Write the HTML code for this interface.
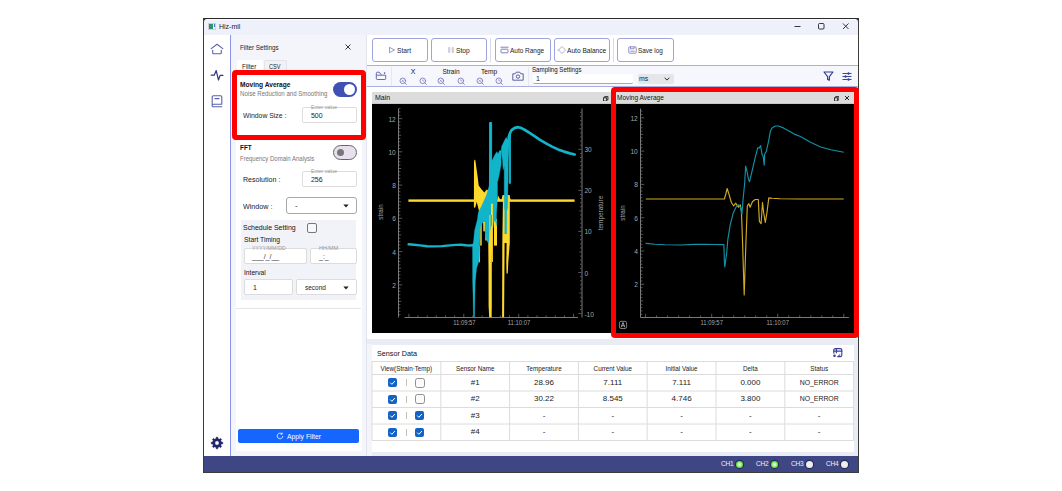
<!DOCTYPE html>
<html>
<head>
<meta charset="utf-8">
<title>Hiz-mil</title>
<style>
*{box-sizing:border-box;margin:0;padding:0}
html,body{width:1062px;height:491px;background:#fff;overflow:hidden;font-family:"Liberation Sans",sans-serif;color:#222}
.a{position:absolute}
.t{position:absolute;white-space:nowrap;line-height:10px;font-size:7.5px;color:#222}
.t{transform-origin:0 50%}
.ph{transform-origin:0 50%}
.c{text-align:center;transform-origin:50% 50%}
.btn{position:absolute;top:38px;height:24px;background:#fff;border:1px solid #9ea4de;border-radius:3px}
.inp{position:absolute;background:#fff;border:1px solid #dcdcdc;border-radius:2px}
.ph{position:absolute;font-size:5px;line-height:6px;color:#999;white-space:nowrap;}
.cb{position:absolute;width:9px;height:9px;border-radius:2px}
.on{background:#1565c0}
.off{background:#fff;border:1px solid #8a8a8a}
.vs{position:absolute;width:1px;background:#d9dbe6}
.hl{position:absolute;height:1px}
</style>
</head>
<body>
<!-- window frame -->
<div class="a" style="left:203px;top:18px;width:656px;height:455px;background:#f2f4fa;border:1px solid #3c3c3c;border-top:1px solid #2a2a2a"></div>
<!-- title bar -->
<div class="a" style="left:204px;top:19px;width:3px;height:3px;background:#222"></div><div class="a" style="left:855px;top:19px;width:3px;height:3px;background:#222"></div><div class="a" style="left:204px;top:19px;width:654px;height:16px;background:#eef1f9;border-radius:3px 3px 0 0;border-top:1px solid #fafbff"></div>
<div class="a" style="left:208px;top:23px;width:8px;height:6.500px;background:linear-gradient(to right,#2b7fa0 0,#2e9a5c 3.500px,#f4f4f4 3.500px);border:1px solid #cfcfd4"></div>
<div class="a" style="left:214px;top:24px;width:1px;height:3px;background:#3a7bd0"></div>
<div class="t" style="left:219px;top:22px;font-size:7px;color:#222">Hiz-mil</div>
<svg class="a" style="left:790px;top:19px" width="68" height="16" viewBox="0 0 68 16"><g stroke="#222" stroke-width="0.9" fill="none"><path d="M4.5 7.5h6"/><rect x="28.5" y="4.5" width="5.5" height="5.5" rx="1"/><path d="M53 4.5l5.5 5.5M58.5 4.5l-5.5 5.5"/></g></svg>
<!-- nav -->
<div class="a" style="left:204px;top:35px;width:26px;height:421px;background:#fff"></div>
<div class="a" style="left:230px;top:35px;width:1px;height:421px;background:#8d95ea"></div>

<!-- nav icons -->
<svg class="a" style="left:210px;top:43px" width="14" height="12" viewBox="0 0 14 12"><g fill="none" stroke="#5a61aa" stroke-width="1.100" stroke-linejoin="round" stroke-linecap="round"><path d="M1.200 5.600L7 1.200l5.800 4.400"/><path d="M2.700 7.200v2.600a1 1 0 0 0 1 1h6.600a1 1 0 0 0 1-1V7.200"/></g></svg>
<svg class="a" style="left:210px;top:68px" width="14" height="14" viewBox="0 0 14 14"><path d="M1.200 7.200h3l2-4.600 2.300 9.400 1.600-4.600h2.800" fill="none" stroke="#2f3788" stroke-width="1.200" stroke-linejoin="round" stroke-linecap="round"/></svg>
<svg class="a" style="left:210px;top:94px" width="14" height="14" viewBox="0 0 14 14"><g fill="none" stroke="#5a61aa" stroke-width="1.100" stroke-linejoin="round" stroke-linecap="round"><path d="M2.200 11V3a1.200 1.200 0 0 1 1.200-1.200h7.200A1.200 1.200 0 0 1 11.800 3v7.200H3.400a1.100 1.100 0 0 0 0 2.600h8.400"/><path d="M5 4.600h4"/></g></svg>
<svg class="a" style="left:209px;top:435px" width="16" height="16" viewBox="0 0 16 16"><path fill="#1e2468" fill-rule="evenodd" stroke="#1e2468" stroke-width="0.600" stroke-linejoin="round" d="M7.00 3.82 L7.23 2.25 L8.77 2.25 L9.00 3.82 L10.25 4.33 L11.52 3.39 L12.61 4.48 L11.67 5.75 L12.18 7.00 L13.75 7.23 L13.75 8.77 L12.18 9.00 L11.67 10.25 L12.61 11.52 L11.52 12.61 L10.25 11.67 L9.00 12.18 L8.77 13.75 L7.23 13.75 L7.00 12.18 L5.75 11.67 L4.48 12.61 L3.39 11.52 L4.33 10.25 L3.82 9.00 L2.25 8.77 L2.25 7.23 L3.82 7.00 L4.33 5.75 L3.39 4.48 L4.48 3.39 L5.75 4.33Z M10.20 8.00 A2.2 2.2 0 1 0 5.80 8.00 A2.2 2.2 0 1 0 10.20 8.00Z"/></svg>

<!-- filter panel -->
<div class="a" style="left:232px;top:35px;width:134px;height:421px;background:#f4f5fa"></div>
<div class="a" style="left:236px;top:70px;width:126px;height:380.500px;background:#fff;border-radius:0 0 2px 2px"></div>
<div class="t" style="left:240px;top:43px;font-size:7.500px;color:#222;transform:scaleX(0.845)">Filter Settings</div>
<svg class="a" style="left:344px;top:43px" width="8" height="8" viewBox="0 0 8 8"><path d="M1.500 1.500l5 5M6.500 1.500l-5 5" stroke="#222" stroke-width="0.9" fill="none"/></svg>
<div class="a" style="left:237px;top:60px;width:26px;height:12px;background:#fff;border-radius:2px 2px 0 0"></div>
<div class="a" style="left:264px;top:60px;width:23px;height:12px;background:#f1f2f5;border:1px solid #e3e4ea;border-bottom:none;border-radius:2px 2px 0 0"></div>
<div class="t" style="left:242px;top:61.6px;font-size:7.500px;transform:scaleX(0.856)">Filter</div>
<div class="t" style="left:269px;top:61.6px;font-size:7.500px;transform:scaleX(0.740)">CSV</div>

<!-- moving average card -->
<div class="t" style="left:240px;top:80px;font-size:7.500px;font-weight:bold;color:#111;transform:scaleX(0.880)">Moving Average</div>
<div class="t" style="left:240px;top:89px;font-size:6.500px;color:#777;transform:scaleX(0.938)">Noise Reduction and Smoothing</div>
<div class="a" style="left:333px;top:82px;width:24px;height:15px;border-radius:8px;background:#3f51b5"></div>
<div class="a" style="left:344px;top:84px;width:11px;height:11px;border-radius:6px;background:#fff"></div>
<div class="t" style="left:243px;top:110.6px;font-size:8px;color:#222;transform:scaleX(0.856)">Window Size :</div>
<div class="inp" style="left:302px;top:107px;width:55px;height:16px"></div>
<div class="ph" style="left:311px;top:104px;transform:scaleX(1.028)">Enter value</div>
<div class="t" style="left:311px;top:110.6px;font-size:7.500px;transform:scaleX(0.928)">500</div>

<!-- FFT card -->
<div class="t" style="left:240px;top:142.5px;font-size:7.500px;font-weight:bold;color:#111;transform:scaleX(0.848)">FFT</div>
<div class="t" style="left:240px;top:154px;font-size:6.500px;color:#777;transform:scaleX(0.923)">Frequency Domain Analysis</div>
<div class="a" style="left:333px;top:145px;width:24px;height:15px;border-radius:8px;background:#e8e0ec;border:1px solid #666"></div>
<div class="a" style="left:337px;top:149px;width:7px;height:7px;border-radius:4px;background:#777"></div>
<div class="t" style="left:243px;top:174.5px;font-size:8px;transform:scaleX(0.884)">Resolution :</div>
<div class="inp" style="left:302px;top:171px;width:55px;height:16px"></div>
<div class="ph" style="left:311px;top:168px;transform:scaleX(1.028)">Enter value</div>
<div class="t" style="left:311px;top:175.4px;font-size:7.500px;transform:scaleX(0.928)">256</div>
<div class="t" style="left:243px;top:201.5px;font-size:8px;transform:scaleX(0.897)">Window :</div>
<div class="inp" style="left:286px;top:197px;width:71px;height:17px;border-color:#a8a8a8;border-radius:3px"></div>
<div class="t" style="left:295px;top:201px;font-size:7.500px">-</div>
<svg class="a" style="left:343px;top:204px" width="6" height="4" viewBox="0 0 6 4"><path d="M0.300 0.500h5.400L3 3.600z" fill="#222"/></svg>

<!-- schedule block -->
<div class="a" style="left:241px;top:220px;width:115px;height:80px;background:#f1f3f9"></div>
<div class="t" style="left:243px;top:223px;font-size:7.500px;color:#111;transform:scaleX(0.928)">Schedule Setting</div>
<div class="a" style="left:307px;top:223px;width:10px;height:10px;border:1px solid #777;border-radius:2px;background:#f7f7fb"></div>
<div class="t" style="left:244px;top:235px;font-size:7px;color:#111;transform:scaleX(0.965)">Start Timing</div>
<div class="inp" style="left:244px;top:248px;width:63px;height:16px"></div>
<div class="inp" style="left:310px;top:248px;width:47px;height:16px"></div>
<div class="ph" style="left:252px;top:245px;transform:scaleX(1.060)">YYYY/MM/DD</div>
<div class="ph" style="left:319px;top:245px;transform:scaleX(1.135)">HH/MM</div>
<div class="t" style="left:252px;top:252px;font-size:7px;color:#333">___/_/__</div>
<div class="t" style="left:319px;top:252px;font-size:7px;color:#333">_:_</div>
<div class="t" style="left:244px;top:268px;font-size:7px;color:#111;transform:scaleX(0.948)">Interval</div>
<div class="inp" style="left:244px;top:279px;width:49px;height:16px"></div>
<div class="inp" style="left:296px;top:279px;width:61px;height:16px"></div>
<div class="t" style="left:253px;top:283px;font-size:7px">1</div>
<div class="t" style="left:305px;top:283px;font-size:7px;transform:scaleX(0.925)">second</div>
<svg class="a" style="left:343px;top:286px" width="6" height="4" viewBox="0 0 6 4"><path d="M0.300 0.500h5.400L3 3.600z" fill="#222"/></svg>
<div class="hl" style="left:236px;top:308px;width:125px;background:#e6e6ea"></div>

<!-- apply -->
<div class="a" style="left:238px;top:429px;width:121px;height:14px;background:#1565ff;border-radius:2px"></div>
<div class="t" style="left:286.500px;top:432px;font-size:7.300px;color:#fff;transform:scaleX(0.931)">Apply Filter</div>
<svg class="a" style="left:276px;top:432px" width="8" height="8" viewBox="0 0 8 8"><path d="M6.800 4a2.800 2.800 0 1 1-.9-2.100M6.200 0.600v1.600H4.600" fill="none" stroke="#fff" stroke-width="0.800"/></svg>


<!-- top toolbar -->
<div class="a" style="left:367px;top:35px;width:491px;height:31px;background:#fff"></div>
<div class="hl" style="left:367px;top:65px;width:491px;background:#a9aee2"></div>
<div class="a" style="left:367px;top:66px;width:491px;height:21px;background:#f6f7fc"></div>
<div class="hl" style="left:367px;top:86px;width:491px;background:#a9aee2"></div>
<div class="a" style="left:366px;top:35px;width:1px;height:421px;background:#e3e5ee"></div>
<div class="btn" style="left:372px;width:56px"></div>
<div class="btn" style="left:431px;width:56px"></div>
<div class="vs" style="left:490px;top:38px;height:24px"></div>
<div class="btn" style="left:495px;width:56px"></div>
<div class="btn" style="left:554px;width:56px"></div>
<div class="vs" style="left:613px;top:38px;height:24px"></div>
<div class="btn" style="left:617px;width:57px"></div>
<svg class="a" style="left:388px;top:46px" width="8" height="8" viewBox="0 0 8 8"><path d="M1.500 1.300v5.400L6.500 4z" fill="none" stroke="#7a80b8" stroke-width="0.800" stroke-linejoin="round"/></svg>
<div class="t" style="left:397px;top:45.600px;font-size:7px;transform:scaleX(0.946)">Start</div>
<svg class="a" style="left:447px;top:46px" width="8" height="8" viewBox="0 0 8 8"><path d="M1.500 1.500h1.500v5h-1.500zM5 1.500h1.500v5H5z" fill="#d4d6e0" stroke="#b8bbcc" stroke-width="0.500"/></svg>
<div class="t" style="left:456px;top:45.600px;font-size:7px;transform:scaleX(0.951)">Stop</div>
<svg class="a" style="left:500px;top:46px" width="9" height="8" viewBox="0 0 9 8"><g fill="none" stroke="#6d74b8" stroke-width="0.900"><path d="M0.500 1.200h8"/><rect x="1" y="3.200" width="7" height="3.600" rx="0.500"/></g></svg>
<div class="t" style="left:510px;top:45.600px;font-size:7px;transform:scaleX(0.924)">Auto Range</div>
<svg class="a" style="left:557px;top:45px" width="10" height="10" viewBox="0 0 10 10"><path d="M5 1.500L8.500 5 5 8.500 1.500 5z" fill="none" stroke="#8a8fb8" stroke-width="0.700"/><path d="M0.500 5h1.500" stroke="#8a8fb8" stroke-width="0.600"/></svg>
<div class="t" style="left:567px;top:45.600px;font-size:7px;transform:scaleX(0.942)">Auto Balance</div>
<svg class="a" style="left:628px;top:46px" width="9" height="8" viewBox="0 0 9 8"><g fill="none" stroke="#6d74b8" stroke-width="0.800"><rect x="0.800" y="0.800" width="7.400" height="6.400" rx="0.800"/><path d="M2.500 0.800v2h3.500v-2M2.300 5.200h4.400"/></g></svg>
<div class="t" style="left:638px;top:45.600px;font-size:7px;transform:scaleX(0.908)">Save log</div>

<!-- second toolbar -->
<svg class="a" style="left:375px;top:71px" width="12" height="10" viewBox="0 0 12 10"><g fill="none" stroke="#646bb4" stroke-width="1" stroke-linejoin="round" stroke-linecap="round"><path d="M1.300 4.200V2.200a1 1 0 0 1 1-1h2l2.200 3h4.200v3.500a0.800 0.800 0 0 1-0.800 0.800H2.100a0.800 0.800 0 0 1-0.800-0.800zM1.300 4.200h5"/></g><circle cx="9.600" cy="2.100" r="0.800" fill="#4a51a4"/></svg>
<div class="vs" style="left:391px;top:67px;height:19px;background:#e4e6f0"></div>
<div class="t c" style="left:403px;top:66.700px;width:20px;font-size:7px;color:#111">X</div>
<div class="t c" style="left:436px;top:66.700px;width:30px;font-size:7px;color:#111;transform:scaleX(0.934)">Strain</div>
<div class="t c" style="left:474px;top:66.700px;width:30px;font-size:7px;color:#111;transform:scaleX(0.942)">Temp</div>
<svg class="a" style="left:399px;top:77px" width="9" height="9" viewBox="0 0 9 9"><g fill="none" stroke="#7a80be" stroke-width="0.900" stroke-linecap="round"><circle cx="3.800" cy="3.800" r="2.800"/><path d="M5.800 5.800l1.600 1.600"/><path d="M2.800 2.800l2 2M4.800 2.800l-2 2" stroke-width="0.600"/></g></svg><svg class="a" style="left:419px;top:77px" width="9" height="9" viewBox="0 0 9 9"><g fill="none" stroke="#7a80be" stroke-width="0.900" stroke-linecap="round"><circle cx="3.800" cy="3.800" r="2.800"/><path d="M5.800 5.800l1.600 1.600"/><path d="M3.800 2.600v1.400h1" stroke-width="0.600"/></g></svg><svg class="a" style="left:437px;top:77px" width="9" height="9" viewBox="0 0 9 9"><g fill="none" stroke="#7a80be" stroke-width="0.900" stroke-linecap="round"><circle cx="3.800" cy="3.800" r="2.800"/><path d="M5.800 5.800l1.600 1.600"/><path d="M2.800 2.800l2 2M4.800 2.800l-2 2" stroke-width="0.600"/></g></svg><svg class="a" style="left:457px;top:77px" width="9" height="9" viewBox="0 0 9 9"><g fill="none" stroke="#7a80be" stroke-width="0.900" stroke-linecap="round"><circle cx="3.800" cy="3.800" r="2.800"/><path d="M5.800 5.800l1.600 1.600"/><path d="M3.800 2.600v1.400h1" stroke-width="0.600"/></g></svg><svg class="a" style="left:476px;top:77px" width="9" height="9" viewBox="0 0 9 9"><g fill="none" stroke="#7a80be" stroke-width="0.900" stroke-linecap="round"><circle cx="3.800" cy="3.800" r="2.800"/><path d="M5.800 5.800l1.600 1.600"/><path d="M2.800 2.800l2 2M4.800 2.800l-2 2" stroke-width="0.600"/></g></svg><svg class="a" style="left:495px;top:77px" width="9" height="9" viewBox="0 0 9 9"><g fill="none" stroke="#7a80be" stroke-width="0.900" stroke-linecap="round"><circle cx="3.800" cy="3.800" r="2.800"/><path d="M5.800 5.800l1.600 1.600"/><path d="M3.800 2.600v1.400h1" stroke-width="0.600"/></g></svg>
<svg class="a" style="left:512px;top:71px" width="12" height="10" viewBox="0 0 12 10"><g fill="none" stroke="#4a5196" stroke-width="0.900" stroke-linejoin="round"><path d="M0.800 2.800h2.400l1-1.600h3.600l1 1.600h2.400v6.400H0.800z"/><circle cx="6" cy="5.600" r="1.700"/></g></svg>
<div class="vs" style="left:528px;top:67px;height:19px;background:#e4e6f0"></div>
<div class="t" style="left:532px;top:65px;font-size:6.500px;color:#111;transform:scaleX(0.945)">Sampling Settings</div>
<div class="a" style="left:533px;top:74.400px;width:100px;height:9.600px;background:#fff;border-bottom:1px solid #a8a8a8;border-radius:2px"></div>
<div class="t" style="left:536px;top:75px;font-size:7px;line-height:8px">1</div>
<div class="a" style="left:638px;top:74px;width:36px;height:10px;background:#e4e6ea;border-radius:2px"></div>
<div class="t" style="left:639px;top:75.300px;font-size:7.500px;line-height:8px;color:#222;transform:scaleX(0.930)">ms</div>
<svg class="a" style="left:663.500px;top:77px" width="6" height="4" viewBox="0 0 6 4"><path d="M0.600 0.700L3 3.100l2.400-2.400" fill="none" stroke="#222" stroke-width="0.950"/></svg>
<svg class="a" style="left:822.500px;top:71px" width="11" height="11" viewBox="0 0 11 11"><path d="M1 1h9L6.400 5.600v3.600L4.600 8.400V5.600z" fill="none" stroke="#2f3a9a" stroke-width="1.150" stroke-linejoin="round"/></svg>
<svg class="a" style="left:841.500px;top:71.500px" width="10" height="9" viewBox="0 0 10 9"><g stroke="#3a449f" stroke-width="1.100" fill="none"><path d="M0.500 1.500h9M0.500 4.500h9M0.500 7.500h9"/><path d="M6.500 0.300v2.400M3.500 3.300v2.400M6.500 6.300v2.400" stroke-width="1.500"/></g></svg>


<!-- chart area -->
<div class="a" style="left:367px;top:87px;width:491px;height:252px;background:#fff"></div>
<div class="a" style="left:372px;top:92px;width:239px;height:12px;background:#dcdcdc;border-bottom:1px solid #c8c8c8"></div>
<div class="t" style="left:375px;top:93px;font-size:7px;color:#111">Main</div>
<svg class="a" style="left:603px;top:95.500px" width="5.500" height="5.500" viewBox="0 0 6 6"><g fill="none" stroke="#222" stroke-width="0.950"><rect x="0.500" y="2" width="3.500" height="3.500"/><path d="M1.800 2V0.600h3.600v3.600H4"/></g></svg>
<!--MAIN_CHART_START--><svg class="a" style="left:372px;top:104px" width="239" height="229" viewBox="0 0 239 229"><rect width="239" height="229" fill="#000"/><g stroke="#7a7a7a" stroke-width="1" fill="none"><path d="M26.5 4.5V213.5"/><path d="M210 4.5V213.5"/><path d="M32.5 213.5H206"/><path d="M27 4.6h1.4M27 8.0h1.4M27 11.3h1.4M27 14.6h3.2M27 17.9h1.4M27 21.2h1.4M27 24.6h1.4M27 27.9h1.4M27 31.2h2.2M27 34.5h1.4M27 37.9h1.4M27 41.2h1.4M27 44.5h1.4M27 47.8h3.2M27 51.2h1.4M27 54.5h1.4M27 57.8h1.4M27 61.1h1.4M27 64.5h2.2M27 67.8h1.4M27 71.1h1.4M27 74.4h1.4M27 77.8h1.4M27 81.1h3.2M27 84.4h1.4M27 87.7h1.4M27 91.1h1.4M27 94.4h1.4M27 97.7h2.2M27 101.0h1.4M27 104.3h1.4M27 107.7h1.4M27 111.0h1.4M27 114.3h3.2M27 117.6h1.4M27 121.0h1.4M27 124.3h1.4M27 127.6h1.4M27 130.9h2.2M27 134.3h1.4M27 137.6h1.4M27 140.9h1.4M27 144.2h1.4M27 147.6h3.2M27 150.9h1.4M27 154.2h1.4M27 157.5h1.4M27 160.9h1.4M27 164.2h2.2M27 167.5h1.4M27 170.8h1.4M27 174.2h1.4M27 177.5h1.4M27 180.8h3.2M27 184.1h1.4M27 187.4h1.4M27 190.8h1.4M27 194.1h1.4M27 197.4h2.2M27 200.7h1.4M27 204.1h1.4M27 207.4h1.4M27 210.7h1.4" stroke-width="0.8" stroke="#6c6c6c"/><path d="M209.5 8.3h-1.4M209.5 12.4h-1.4M209.5 16.6h-1.4M209.5 20.7h-1.4M209.5 24.8h-2.2M209.5 28.9h-1.4M209.5 33.0h-1.4M209.5 37.1h-1.4M209.5 41.2h-1.4M209.5 45.3h-3.2M209.5 49.4h-1.4M209.5 53.5h-1.4M209.5 57.6h-1.4M209.5 61.7h-1.4M209.5 65.8h-2.2M209.5 69.9h-1.4M209.5 74.0h-1.4M209.5 78.2h-1.4M209.5 82.3h-1.4M209.5 86.4h-3.2M209.5 90.5h-1.4M209.5 94.6h-1.4M209.5 98.7h-1.4M209.5 102.8h-1.4M209.5 106.9h-2.2M209.5 111.0h-1.4M209.5 115.1h-1.4M209.5 119.2h-1.4M209.5 123.3h-1.4M209.5 127.4h-3.2M209.5 131.5h-1.4M209.5 135.7h-1.4M209.5 139.8h-1.4M209.5 143.9h-1.4M209.5 148.0h-2.2M209.5 152.1h-1.4M209.5 156.2h-1.4M209.5 160.3h-1.4M209.5 164.4h-1.4M209.5 168.5h-3.2M209.5 172.6h-1.4M209.5 176.7h-1.4M209.5 180.8h-1.4M209.5 184.9h-1.4M209.5 189.0h-2.2M209.5 193.2h-1.4M209.5 197.3h-1.4M209.5 201.4h-1.4M209.5 205.5h-1.4M209.5 209.6h-3.2" stroke-width="0.8" stroke="#6c6c6c"/><path d="M36.9 213v-3.2M46.0 213v-1.6M55.2 213v-1.6M64.3 213v-1.6M73.5 213v-1.6M82.6 213v-1.6M91.8 213v-3.2M100.9 213v-1.6M110.1 213v-1.6M119.2 213v-1.6M128.4 213v-1.6M137.5 213v-1.6M146.7 213v-3.2M155.9 213v-1.6M165.0 213v-1.6M174.1 213v-1.6M183.3 213v-1.6M192.5 213v-1.6M201.6 213v-3.2" stroke-width="0.8" stroke="#6c6c6c"/></g><g font-family="Liberation Sans, sans-serif" font-size="6.6" fill="#a6a6a6"><text x="23.80000000000001" y="17.6" text-anchor="end">12</text><text x="23.80000000000001" y="50.8" text-anchor="end">10</text><text x="23.80000000000001" y="84.1" text-anchor="end">8</text><text x="23.80000000000001" y="117.3" text-anchor="end">6</text><text x="23.80000000000001" y="150.6" text-anchor="end">4</text><text x="23.80000000000001" y="183.8" text-anchor="end">2</text><text x="212.39999999999998" y="48.3">30</text><text x="212.39999999999998" y="89.4">20</text><text x="212.39999999999998" y="130.4">10</text><text x="212.39999999999998" y="171.5">0</text><text x="212.39999999999998" y="212.6">-10</text><text x="92.39999999999998" y="221.3" text-anchor="middle" textLength="22.4" lengthAdjust="spacingAndGlyphs">11:09:57</text><text x="147" y="221.3" text-anchor="middle" textLength="22.4" lengthAdjust="spacingAndGlyphs">11:10:07</text><text transform="translate(11.199999999999989 108) rotate(-90)" text-anchor="middle" font-size="6.3">strain</text><text transform="translate(231.29999999999995 109) rotate(-90)" text-anchor="middle" font-size="6.6" textLength="34.5" lengthAdjust="spacingAndGlyphs">temperature</text></g><g fill="#ffd82c"><rect x="36.4" y="95.4" width="166.2" height="2.4" fill="#ffd82c"/><polygon points="101.9,96.0 102.0,58.0 102.4,55.7 103.3,56.0 104.7,66.1 105.7,73.2 106.7,81.4 109.2,84.9 112.3,88.5 114.8,85.4 116.4,86.5 117.4,91.0 117.0,101.0 114.0,108.0 111.0,114.0 109.0,118.0 107.7,109.9 106.2,103.8 104.7,97.7 103.4,103.0 102.6,104.0 101.9,103.0"/><polygon points="115.8,96.0 120.5,96.0 119.8,164.0 119.8,202.0 119.6,213.2 117.2,213.2 116.6,202.0 116.5,164.0"/><polygon points="131.0,91.0 137.8,91.0 137.8,139.0 136.3,158.0 135.8,169.5 134.5,169.5 134.3,158.0 134.6,139.0 132.6,139.0 132.1,213.2 130.1,213.2 130.3,139.0"/><polygon points="125.0,97.0 126.0,91.3 127.3,94.0 128.5,95.6 129.6,95.6 130.6,91.0 132.0,91.0 132.0,97.0"/><polygon points="136.0,97.0 136.7,91.3 137.6,92.5 138.6,95.6 139.5,97.0"/><rect x="108.2" y="118.0" width="1.5" height="23.6" fill="#ffd82c"/><rect x="122.0" y="115.0" width="3.0" height="26.6" fill="#ffd82c"/><rect x="113.3" y="129.0" width="1.5" height="7.5" fill="#ffd82c"/><rect x="106.6" y="142.0" width="1.3" height="16.3" fill="#ffd82c"/></g><g fill="#12b4ca" stroke="#12b4ca" stroke-linejoin="round"><polyline points="36.6,140.3 42.0,140.8 48.0,141.4 55.0,142.2 62.0,142.4 70.0,142.1 78.0,141.4 84.0,140.9 89.0,140.7 94.0,141.3 98.0,141.5 101.0,141.3" stroke-width="2.4" fill="none" stroke-linecap="round"/><polygon stroke-width="0.3" points="101.4,213.2 101.0,190.7 100.6,177.5 100.5,142.5 101.6,136.5 102.6,126.4 105.2,116.2 106.4,108.0 109.7,101.7 114.3,91.5 117.2,81.4 117.6,71.2 117.6,61.0 119.9,56.7 123.0,50.6 125.0,47.6 126.0,50.1 127.6,46.5 129.1,46.5 129.1,61.0 127.0,72.0 125.5,78.0 125.5,91.5 125.0,101.7 124.5,111.0 124.6,116.2 125.0,118.0 124.8,122.0 123.4,117.0 122.0,117.0 121.0,124.0 119.4,121.0 117.9,128.0 117.4,136.5 116.4,139.6 114.8,136.5 112.8,126.4 111.3,118.0 109.5,120.0 108.2,124.0 107.7,146.0 107.2,154.0 106.6,158.0 104.6,164.2 103.3,177.5 102.9,190.7 102.6,213.2"/><polygon stroke-width="0.3" points="129.1,47.0 129.6,42.5 132.2,36.9 134.2,33.3 135.2,35.3 136.7,32.8 137.2,36.0 136.8,46.0 136.2,56.0 135.7,103.8 134.8,107.0 134.7,129.9 132.7,129.9 132.7,107.0 132.2,103.8 132.2,62.0 131.1,66.0 130.5,56.0"/><rect x="137.2" y="30.0" width="1.2" height="49.3" fill="#12b4ca"/><rect x="117.6" y="18.5" width="2.0" height="67.5" fill="#12b4ca"/><polyline points="136.7,33.2 138.3,28.4 139.8,25.9 142.8,23.8 146.0,23.2 149.0,23.9 153.0,26.0 158.0,29.2 164.0,33.2 168.0,35.8 174.0,39.4 180.0,42.6 186.0,45.4 192.0,47.6 198.0,49.4 202.7,50.5" stroke-width="2.7" fill="none" stroke-linecap="round"/></g><g fill="#ffd82c"><rect x="111.3" y="118.0" width="1.5" height="9.4" fill="#ffd82c"/><rect x="117.4" y="111.0" width="1.0" height="47.0" fill="#ffd82c"/><rect x="119.9" y="99.7" width="1.0" height="58.3" fill="#ffd82c"/><rect x="119.0" y="99.7" width="1.0" height="11.3" fill="#ffd82c"/></g></svg><!--MAIN_CHART_END-->
<div class="a" style="left:616px;top:92px;width:238px;height:12px;background:#dcdcdc;border-bottom:1px solid #c8c8c8"></div>
<div class="t" style="left:617px;top:93px;font-size:7px;color:#111;transform:scaleX(0.936)">Moving Average</div>
<svg class="a" style="left:833.500px;top:95.500px" width="5.500" height="5.500" viewBox="0 0 6 6"><g fill="none" stroke="#222" stroke-width="0.950"><rect x="0.500" y="2" width="3.500" height="3.500"/><path d="M1.800 2V0.600h3.600v3.600H4"/></g></svg>
<svg class="a" style="left:844px;top:95px" width="6" height="6" viewBox="0 0 6 6"><path d="M1 1l4 4M5 1L1 5" stroke="#111" stroke-width="0.900" fill="none"/></svg>
<!--MA_CHART_START--><svg class="a" style="left:616px;top:104px" width="238" height="229" viewBox="0 0 238 229"><rect width="238" height="229" fill="#000"/><g stroke="#7a7a7a" stroke-width="1" fill="none"><path d="M24.5 4.5V213.5H232.79999999999995"/><path d="M25 7.1h1.4M25 10.5h1.4M25 13.8h3.2M25 17.1h1.4M25 20.5h1.4M25 23.8h1.4M25 27.1h1.4M25 30.4h2.2M25 33.8h1.4M25 37.1h1.4M25 40.4h1.4M25 43.8h1.4M25 47.1h3.2M25 50.4h1.4M25 53.8h1.4M25 57.1h1.4M25 60.4h1.4M25 63.8h2.2M25 67.1h1.4M25 70.4h1.4M25 73.7h1.4M25 77.1h1.4M25 80.4h3.2M25 83.7h1.4M25 87.1h1.4M25 90.4h1.4M25 93.7h1.4M25 97.0h2.2M25 100.4h1.4M25 103.7h1.4M25 107.0h1.4M25 110.4h1.4M25 113.7h3.2M25 117.0h1.4M25 120.4h1.4M25 123.7h1.4M25 127.0h1.4M25 130.3h2.2M25 133.7h1.4M25 137.0h1.4M25 140.3h1.4M25 143.7h1.4M25 147.0h3.2M25 150.3h1.4M25 153.7h1.4M25 157.0h1.4M25 160.3h1.4M25 163.6h2.2M25 167.0h1.4M25 170.3h1.4M25 173.6h1.4M25 177.0h1.4M25 180.3h3.2M25 183.6h1.4M25 187.0h1.4M25 190.3h1.4M25 193.6h1.4M25 196.9h2.2M25 200.3h1.4M25 203.6h1.4M25 206.9h1.4M25 210.3h1.4" stroke-width="0.8" stroke="#6c6c6c"/><path d="M29.6 213v-3.2M40.6 213v-1.6M51.6 213v-1.6M62.6 213v-1.6M73.6 213v-1.6M84.6 213v-1.6M95.7 213v-3.2M106.7 213v-1.6M117.7 213v-1.6M128.7 213v-1.6M139.7 213v-1.6M150.7 213v-1.6M161.7 213v-3.2M172.7 213v-1.6M183.7 213v-1.6M194.8 213v-1.6M205.8 213v-1.6M216.8 213v-1.6M227.8 213v-3.2" stroke-width="0.8" stroke="#6c6c6c"/></g><g font-family="Liberation Sans, sans-serif" font-size="6.6" fill="#a6a6a6"><text x="21.799999999999955" y="16.8" text-anchor="end">12</text><text x="21.799999999999955" y="50.1" text-anchor="end">10</text><text x="21.799999999999955" y="83.4" text-anchor="end">8</text><text x="21.799999999999955" y="116.7" text-anchor="end">6</text><text x="21.799999999999955" y="150.0" text-anchor="end">4</text><text x="21.799999999999955" y="183.3" text-anchor="end">2</text><text x="95.70000000000005" y="221.10000000000002" text-anchor="middle" textLength="22.4" lengthAdjust="spacingAndGlyphs">11:09:57</text><text x="161.70000000000005" y="221.10000000000002" text-anchor="middle" textLength="22.4" lengthAdjust="spacingAndGlyphs">11:10:07</text><text transform="translate(9.299999999999955 109) rotate(-90)" text-anchor="middle" font-size="6.3">strain</text></g><rect x="3.3999999999999773" y="217.3" width="7.2" height="7.2" rx="1.6" fill="none" stroke="#b0b0b0" stroke-width="0.7"/><path d="M5.100000000000023 223.3l1.9-4.800 1.900 4.800M5.7999999999999545 221.8h2.400" fill="none" stroke="#e0e0e0" stroke-width="0.700"/><polyline points="29.8,95.0 84.0,95.0 108.4,95.0 109.8,90.0 111.2,84.5 113.0,90.4 115.4,98.5 117.7,102.0 119.6,99.2 122.4,103.2 124.3,100.9 125.4,106.7 126.6,139.5 127.4,166.0 128.2,191.0 129.0,166.0 129.9,139.5 131.3,102.0 132.9,99.7 134.1,103.2 136.4,97.8 139.2,95.5 142.3,95.5 143.4,117.3 145.1,119.6 146.5,98.5 147.7,109.0 149.3,118.4 150.9,109.0 152.8,93.9 156.3,94.3 164.0,94.8 184.0,95.0 227.7,95.0" fill="none" stroke="#d2ab20" stroke-width="1.15" stroke-linejoin="round"/><polyline points="29.6,139.4 39.0,140.2 49.0,140.8 64.0,141.0 79.0,140.4 89.0,140.3 99.0,140.5 107.9,140.6 108.4,158.2 108.8,162.9 110.7,148.8 111.9,134.8 114.2,120.8 117.2,109.1 120.0,103.2 122.4,100.9 124.3,103.2 125.9,110.2 127.1,95.0 128.5,81.0 128.8,77.7 129.6,62.2 130.8,66.3 132.4,75.2 133.5,77.7 135.7,68.7 138.9,54.9 141.7,43.8 143.0,44.3 144.6,41.5 145.9,50.0 147.2,52.4 148.2,61.1 148.7,50.0 150.3,47.5 152.8,36.1 154.4,27.2 156.0,23.9 159.3,22.0 162.5,22.0 167.4,23.9 173.9,27.5 179.0,30.4 184.4,32.5 194.5,38.2 204.7,43.0 214.9,45.7 227.7,48.3" fill="none" stroke="#1292a6" stroke-width="1.15" stroke-linejoin="round"/></svg><!--MA_CHART_END-->

<!-- sensor panel -->
<div class="a" style="left:367px;top:339px;width:491px;height:117px;background:#eaecf5"></div>
<div class="a" style="left:367px;top:344px;width:5px;height:112px;background:#f4f5fa"></div>
<div class="a" style="left:372px;top:344.500px;width:482px;height:107px;background:#fff"></div>


<!-- red annotations -->
<div class="a" style="left:232px;top:70px;width:134px;height:70px;border:5px solid #ff0000;border-radius:4px"></div>
<div class="a" style="left:611px;top:87px;width:248px;height:251px;border:5px solid #ff0000;border-radius:4px"></div>

<!-- status -->
<div class="a" style="left:204px;top:456px;width:654px;height:16px;background:#3e4784"></div>
<!--TABLE_START--><div class="t" style="left:377px;top:348.500px;font-size:8px;transform:scaleX(0.900);color:#111">Sensor Data</div><svg class="a" style="left:832px;top:347px" width="12" height="12" viewBox="0 0 12 12"><g fill="none" stroke="#3a3f98" stroke-width="1.100" stroke-linecap="round"><path d="M1.800 6.200V3a1.400 1.400 0 0 1 1.400-1.400h5.200A1.400 1.400 0 0 1 9.800 3v5.200a1.400 1.400 0 0 1-1.400 1.400H5.600"/><path d="M1.800 4.200h8M4.400 1.600v4.200" stroke-width="1.200"/><path d="M7.800 7.400v1.200H6.400" stroke-width="0.700"/></g><circle cx="2.500" cy="8.800" r="1.300" fill="#3a3f98"/></svg><svg class="a" style="left:371px;top:361px" width="485" height="81" viewBox="371 361 485 81"><g stroke="#dcdcdc" stroke-width="1" fill="none"><path d="M372.0 361.5H853.6"/><path d="M372.0 374.5H853.6"/><path d="M372.0 391.0H853.6"/><path d="M372.0 407.5H853.6"/><path d="M372.0 424.0H853.6"/><path d="M372.0 440.5H853.6"/><path d="M372.0 361.5V440.5"/><path d="M440.8 361.5V440.5"/><path d="M509.6 361.5V440.5"/><path d="M578.4 361.5V440.5"/><path d="M647.2 361.5V440.5"/><path d="M716.0 361.5V440.5"/><path d="M784.8 361.5V440.5"/><path d="M853.6 361.5V440.5"/></g></svg><div class="t c" style="left:372.0px;top:363.500px;width:68.8px;font-size:6.300px;color:#222">View(Strain·Temp)</div><div class="t c" style="left:440.8px;top:363.500px;width:68.8px;font-size:6.300px;color:#222">Sensor Name</div><div class="t c" style="left:509.6px;top:363.500px;width:68.8px;font-size:6.300px;color:#222">Temperature</div><div class="t c" style="left:578.4px;top:363.500px;width:68.8px;font-size:6.300px;color:#222">Current Value</div><div class="t c" style="left:647.2px;top:363.500px;width:68.8px;font-size:6.300px;color:#222">Initial Value</div><div class="t c" style="left:716.0px;top:363.500px;width:68.8px;font-size:6.300px;color:#222">Delta</div><div class="t c" style="left:784.8px;top:363.500px;width:68.8px;font-size:6.300px;color:#222">Status</div><svg class="a" style="left:388px;top:378.2px" width="9" height="9" viewBox="0 0 9 9"><rect width="9" height="9" rx="2" fill="#1363c6"/><path d="M2.200 4.600l1.700 1.700 3-3.300" fill="none" stroke="#fff" stroke-width="1"/></svg><div class="a" style="left:406px;top:379.2px;width:1px;height:7px;background:#c9c0b4"></div><div class="a" style="left:415px;top:377.8px;width:10px;height:10px;border:1px solid #8e8e8e;border-radius:2.500px;background:#fbfbfb"></div><div class="t c" style="left:440.8px;top:377.8px;width:68.8px;font-size:8px;color:#222">#1</div><div class="t c" style="left:509.6px;top:377.8px;width:68.8px;font-size:8px;color:#222">28.96</div><div class="t c" style="left:578.4px;top:377.8px;width:68.8px;font-size:8px;color:#222">7.111</div><div class="t c" style="left:647.2px;top:377.8px;width:68.8px;font-size:8px;color:#222">7.111</div><div class="t c" style="left:716.0px;top:377.8px;width:68.8px;font-size:8px;color:#222">0.000</div><div class="t c" style="left:784.8px;top:377.8px;width:68.8px;font-size:6.9px;color:#222">NO_ERROR</div><svg class="a" style="left:388px;top:394.8px" width="9" height="9" viewBox="0 0 9 9"><rect width="9" height="9" rx="2" fill="#1363c6"/><path d="M2.200 4.600l1.700 1.700 3-3.300" fill="none" stroke="#fff" stroke-width="1"/></svg><div class="a" style="left:406px;top:395.8px;width:1px;height:7px;background:#c9c0b4"></div><div class="a" style="left:415px;top:394.2px;width:10px;height:10px;border:1px solid #8e8e8e;border-radius:2.500px;background:#fbfbfb"></div><div class="t c" style="left:440.8px;top:394.2px;width:68.8px;font-size:8px;color:#222">#2</div><div class="t c" style="left:509.6px;top:394.2px;width:68.8px;font-size:8px;color:#222">30.22</div><div class="t c" style="left:578.4px;top:394.2px;width:68.8px;font-size:8px;color:#222">8.545</div><div class="t c" style="left:647.2px;top:394.2px;width:68.8px;font-size:8px;color:#222">4.746</div><div class="t c" style="left:716.0px;top:394.2px;width:68.8px;font-size:8px;color:#222">3.800</div><div class="t c" style="left:784.8px;top:394.2px;width:68.8px;font-size:6.9px;color:#222">NO_ERROR</div><svg class="a" style="left:388px;top:411.2px" width="9" height="9" viewBox="0 0 9 9"><rect width="9" height="9" rx="2" fill="#1363c6"/><path d="M2.200 4.600l1.700 1.700 3-3.300" fill="none" stroke="#fff" stroke-width="1"/></svg><div class="a" style="left:406px;top:412.2px;width:1px;height:7px;background:#c9c0b4"></div><svg class="a" style="left:415px;top:411.2px" width="9" height="9" viewBox="0 0 9 9"><rect width="9" height="9" rx="2" fill="#1363c6"/><path d="M2.200 4.600l1.700 1.700 3-3.300" fill="none" stroke="#fff" stroke-width="1"/></svg><div class="t c" style="left:440.8px;top:410.8px;width:68.8px;font-size:8px;color:#222">#3</div><div class="t c" style="left:509.6px;top:410.8px;width:68.8px;font-size:8px;color:#222">-</div><div class="t c" style="left:578.4px;top:410.8px;width:68.8px;font-size:8px;color:#222">-</div><div class="t c" style="left:647.2px;top:410.8px;width:68.8px;font-size:8px;color:#222">-</div><div class="t c" style="left:716.0px;top:410.8px;width:68.8px;font-size:8px;color:#222">-</div><div class="t c" style="left:784.8px;top:410.8px;width:68.8px;font-size:8px;color:#222">-</div><svg class="a" style="left:388px;top:427.8px" width="9" height="9" viewBox="0 0 9 9"><rect width="9" height="9" rx="2" fill="#1363c6"/><path d="M2.200 4.600l1.700 1.700 3-3.300" fill="none" stroke="#fff" stroke-width="1"/></svg><div class="a" style="left:406px;top:428.8px;width:1px;height:7px;background:#c9c0b4"></div><svg class="a" style="left:415px;top:427.8px" width="9" height="9" viewBox="0 0 9 9"><rect width="9" height="9" rx="2" fill="#1363c6"/><path d="M2.200 4.600l1.700 1.700 3-3.300" fill="none" stroke="#fff" stroke-width="1"/></svg><div class="t c" style="left:440.8px;top:427.2px;width:68.8px;font-size:8px;color:#222">#4</div><div class="t c" style="left:509.6px;top:427.2px;width:68.8px;font-size:8px;color:#222">-</div><div class="t c" style="left:578.4px;top:427.2px;width:68.8px;font-size:8px;color:#222">-</div><div class="t c" style="left:647.2px;top:427.2px;width:68.8px;font-size:8px;color:#222">-</div><div class="t c" style="left:716.0px;top:427.2px;width:68.8px;font-size:8px;color:#222">-</div><div class="t c" style="left:784.8px;top:427.2px;width:68.8px;font-size:8px;color:#222">-</div><div class="t" style="left:721px;top:459.300px;font-size:6.500px;letter-spacing:-0.200px;color:#f0f0f6">CH1</div><div class="a" style="left:736.0px;top:460.800px;width:7px;height:7px;border-radius:4px;background:radial-gradient(circle,#f6fff2 0%,#b9f7a0 30%,#5be035 62%,#48d028 100%);box-shadow:0 0 0 1.200px #262c5e"></div><div class="t" style="left:756px;top:459.300px;font-size:6.500px;letter-spacing:-0.200px;color:#f0f0f6">CH2</div><div class="a" style="left:771.0px;top:460.800px;width:7px;height:7px;border-radius:4px;background:radial-gradient(circle,#f6fff2 0%,#b9f7a0 30%,#5be035 62%,#48d028 100%);box-shadow:0 0 0 1.200px #262c5e"></div><div class="t" style="left:791px;top:459.300px;font-size:6.500px;letter-spacing:-0.200px;color:#f0f0f6">CH3</div><div class="a" style="left:806.1px;top:460.800px;width:7px;height:7px;border-radius:4px;background:radial-gradient(circle,#f2f0ea 0%,#ecebe8 60%,#d8d8da 100%);box-shadow:0 0 0 1.200px #262c5e"></div><div class="t" style="left:826px;top:459.300px;font-size:6.500px;letter-spacing:-0.200px;color:#f0f0f6">CH4</div><div class="a" style="left:840.8px;top:460.800px;width:7px;height:7px;border-radius:4px;background:radial-gradient(circle,#f2f0ea 0%,#ecebe8 60%,#d8d8da 100%);box-shadow:0 0 0 1.200px #262c5e"></div><!--TABLE_END-->
</body>
</html>
